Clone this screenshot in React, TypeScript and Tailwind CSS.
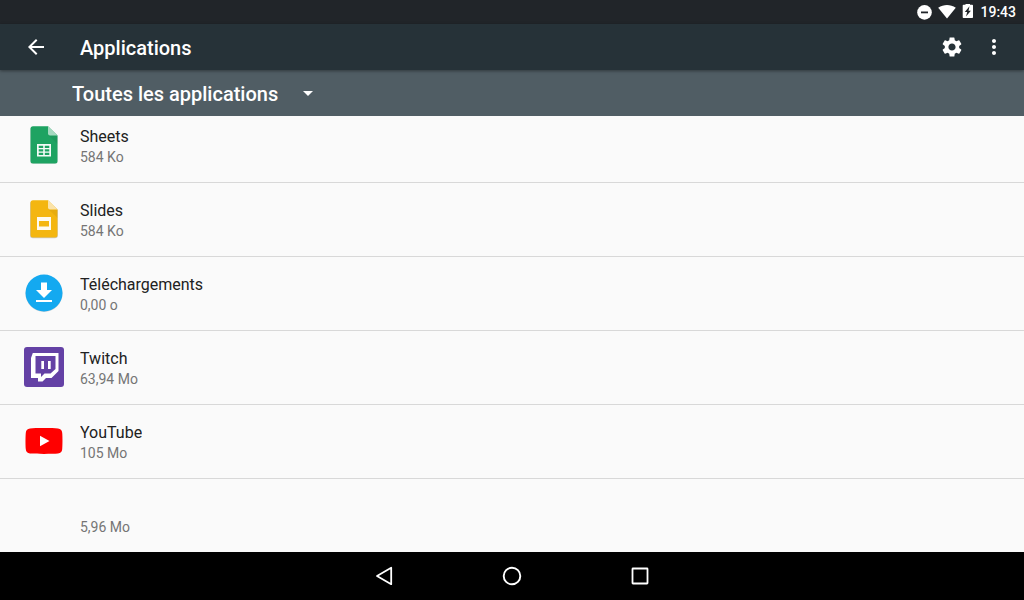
import { ReactNode } from "react";
import { MdArrowBack, MdSettings, MdMoreVert } from "react-icons/md";

interface AppEntry {
  name: string;
  size: string;
  icon: ReactNode;
}

function SheetsIcon() {
  return (
    <svg viewBox="0 0 40 40" className="h-10 w-10">
      <path d="M9 2h15l9.800 9v25a3 3 0 0 1-3 3H9a3 3 0 0 1-3-3V5a3 3 0 0 1 3-3z" fill="#000" opacity=".1" />
      <path d="M9 1.300h15l9.500 9.200V36a2.500 2.500 0 0 1-2.500 2.500H9A2.500 2.500 0 0 1 6.500 36V3.800A2.500 2.500 0 0 1 9 1.300z" fill="#1ea362" />
      <path d="M24.500 10.500 33.500 19v-8.500z" fill="#000" opacity=".06" />
      <path d="M24 1.300l9.500 9.200H26a2 2 0 0 1-2-2z" fill="#a5d9c0" />
      <path
        d="M13 19h14v12.500H13zM14.700 20.700v2.300h4.500v-2.300zm6.100 0v2.300h4.500v-2.300zm-6.100 3.500v2.200h4.500v-2.200zm6.100 0v2.200h4.500v-2.200zm-6.100 3.500v2.200h4.500v-2.200zm6.100 0v2.200h4.500v-2.200z"
        fill="#f5fbf8"
        fillRule="evenodd"
      />
    </svg>
  );
}

function SlidesIcon() {
  return (
    <svg viewBox="0 0 40 40" className="h-10 w-10">
      <path d="M9 2h15l9.800 9v25a3 3 0 0 1-3 3.200H9a3 3 0 0 1-3-3.200V5a3 3 0 0 1 3-3z" fill="#000" opacity=".2" />
      <path d="M9 1.300h15l9.500 9.200V36a2.500 2.500 0 0 1-2.500 2.500H9A2.500 2.500 0 0 1 6.500 36V3.800A2.500 2.500 0 0 1 9 1.300z" fill="#f4b610" />
      <path d="M24.500 10.500 33.500 19v-8.500z" fill="#000" opacity=".05" />
      <path d="M24 1.300l9.500 9.200H26a2 2 0 0 1-2-2z" fill="#fbe3a8" />
      <path d="M13 18h14v13H13zM15 22v5.500h10V22z" fill="#fefaf0" fillRule="evenodd" />
    </svg>
  );
}

function DownloadsIcon() {
  return (
    <svg viewBox="0 0 40 40" className="h-10 w-10">
      <circle cx="20" cy="20.500" r="18.500" fill="#000" opacity=".15" />
      <circle cx="20" cy="20" r="18.500" fill="#14a9f0" />
      <path d="M17 9.500h6v7.500h5L20 25l-8-8h5zM12 27h16v2H12z" fill="#fff" />
    </svg>
  );
}

function TwitchIcon() {
  return (
    <svg viewBox="0 0 40 40" className="h-10 w-10">
      <rect width="40" height="40" rx="3" fill="#6441a5" />
      <path
        d="M8.800 6H34.500v18L27.500 31H22l-3.500 3.500H14V31H7V11zM11.500 9v17.500H17V30l3.500-3.500H26.500l5-4.500V9z"
        fill="#fff"
        fillRule="evenodd"
      />
      <path d="M17.300 14H20v8h-2.700zM24 14h2.700v8H24z" fill="#fff" />
    </svg>
  );
}

function YouTubeIcon() {
  return (
    <svg viewBox="0 0 40 40" className="h-10 w-10">
      <path
        d="M20 7c6 0 11 .1 14 .4 2.500.3 4 1.800 4.200 4.300.4 4 .4 12.600 0 16.600-.2 2.500-1.700 4-4.200 4.300-6 .5-22 .5-28 0-2.500-.3-4-1.800-4.200-4.300-.4-4-.4-12.600 0-16.600C2 9.200 3.500 7.700 6 7.400 9 7.100 14 7 20 7z"
        fill="#f00"
      />
      <path d="M16 14.800v10.400l9.500-5.200z" fill="#fff" />
    </svg>
  );
}

const apps: AppEntry[] = [
  { name: "Sheets", size: "584 Ko", icon: <SheetsIcon /> },
  { name: "Slides", size: "584 Ko", icon: <SlidesIcon /> },
  { name: "Téléchargements", size: "0,00 o", icon: <DownloadsIcon /> },
  { name: "Twitch", size: "63,94 Mo", icon: <TwitchIcon /> },
  { name: "YouTube", size: "105 Mo", icon: <YouTubeIcon /> },
  { name: "", size: "5,96 Mo", icon: null },
];

function StatusBar() {
  return (
    <div className="flex h-6 shrink-0 items-center justify-end bg-[#212529] pr-2">
      <svg viewBox="0 0 16 16" className="mr-1.5 h-4 w-4">
        <circle cx="8.500" cy="8.400" r="7.300" fill="#fff" />
        <path d="M5 7.500h7v1.800H5z" fill="#212529" />
      </svg>
      <svg viewBox="0 0 18 16" className="mr-1 h-4 w-[18px]">
        <path d="M9 14.500.2 3.800C3 2 6 1 9 1s6 1 8.800 2.800z" fill="#fff" />
      </svg>
      <svg viewBox="0 0 16 16" className="mr-1 h-4 w-4">
        <path d="M5.500-.8h4.500V.7h2.200c.5 0 .8.300.8.800v11.700c0 .5-.3.800-.8.800H3.500c-.5 0-.8-.3-.8-.8V1.500c0-.5.300-.8.800-.8h2z" fill="#fff" />
        <path d="M9.500 2.200 4.800 8h2.400L6 12.500 10.900 6.800H8.500z" fill="#212529" />
      </svg>
      <span className="text-sm font-medium text-white">19:43</span>
    </div>
  );
}

function AppRow({ app }: { app: AppEntry }) {
  return (
    <li className="flex shrink-0 gap-4 px-6 pt-4 pb-[17px]">
      <div className="h-10 w-10 shrink-0">{app.icon}</div>
      <div className="min-w-0">
        <p className="h-6 truncate text-base leading-6 text-[#212121]">{app.name}</p>
        <p className="text-sm leading-4 text-[#757575]">{app.size}</p>
      </div>
    </li>
  );
}

export default function App() {
  return (
    <div className="flex h-screen flex-col overflow-hidden bg-[#fafafa] font-[Roboto,sans-serif]">
      <StatusBar />

      {/* Toolbar */}
      <header className="z-10 flex h-[46px] shrink-0 items-center bg-[#263238] pr-[18px] pl-6 text-white shadow-[0_1px_3px_rgba(0,0,0,0.4)]">
        <button aria-label="Retour" className="flex w-14 shrink-0">
          <MdArrowBack className="h-6 w-6" />
        </button>
        <h1 className="flex-1 pt-0.5 text-xl font-medium">Applications</h1>
        <button aria-label="Paramètres">
          <MdSettings className="h-6 w-6" />
        </button>
        <button aria-label="Plus d'options" className="ml-[18px]">
          <MdMoreVert className="h-6 w-6" />
        </button>
      </header>

      {/* Filter */}
      <div className="flex h-[46px] shrink-0 items-center bg-[#505d64] pt-0.5 pl-[72px]">
        <div className="relative">
          <select
            aria-label="Filtre"
            className="w-[248px] appearance-none bg-transparent text-xl font-medium text-white outline-none"
          >
            <option>Toutes les applications</option>
          </select>
          <svg viewBox="0 0 10 5" className="pointer-events-none absolute top-[11px] right-[7px] h-[5px] w-2.5">
            <path d="M0 0h10L5 5z" fill="#fff" />
          </svg>
        </div>
      </div>

      {/* List, scrolled to its end */}
      <main className="flex min-h-0 flex-1 flex-col justify-end overflow-hidden">
        <ul className="divide-y divide-[#d8d8d8]">
          {apps.map((app) => (
            <AppRow key={app.name} app={app} />
          ))}
        </ul>
      </main>

      {/* Navigation */}
      <nav className="flex h-12 shrink-0 items-center justify-center bg-black">
        <button aria-label="Précédent" className="flex w-32 justify-center">
          <svg viewBox="0 0 24 24" className="h-6 w-6" fill="none" stroke="#fff" strokeWidth="1.800" strokeLinejoin="round">
            <path d="M19.200 3.800v16.400L5 12z" />
          </svg>
        </button>
        <button aria-label="Accueil" className="flex w-32 justify-center">
          <svg viewBox="0 0 24 24" className="h-6 w-6" fill="none" stroke="#fff" strokeWidth="1.900">
            <circle cx="12" cy="12" r="8.300" />
          </svg>
        </button>
        <button aria-label="Applications récentes" className="flex w-32 justify-center">
          <svg viewBox="0 0 24 24" className="h-6 w-6" fill="none" stroke="#fff" strokeWidth="1.800">
            <rect x="4.500" y="4.500" width="15" height="15" rx=".5" />
          </svg>
        </button>
      </nav>
    </div>
  );
}
